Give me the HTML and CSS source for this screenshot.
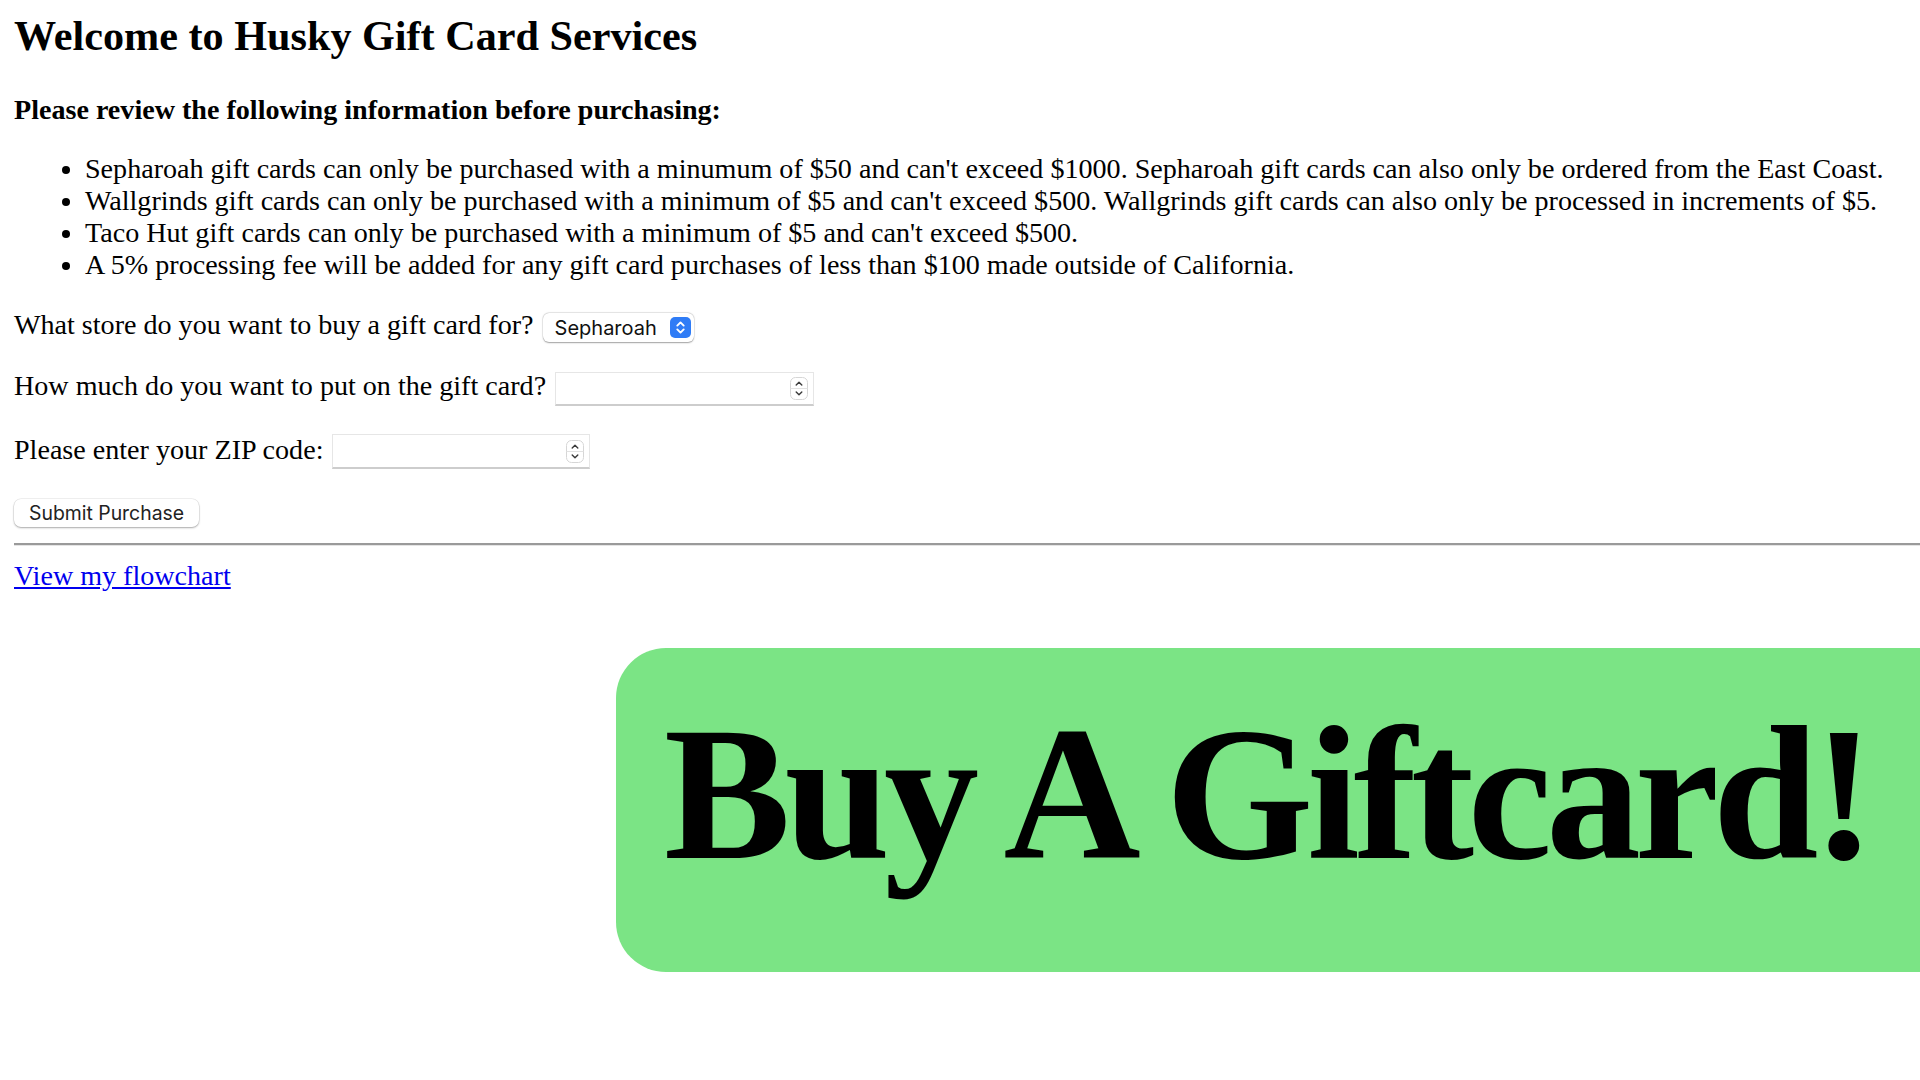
FILE: index.html
```html
<!DOCTYPE html>
<html lang="en">
<head>
<meta charset="utf-8">
<title>Husky Gift Card Services</title>
<link rel="stylesheet" href="styles.css">
</head>
<body>
<main class="page">
  <h1 class="title">Welcome to Husky Gift Card Services</h1>
  <h4 class="subtitle">Please review the following information before purchasing:</h4>
  <ul class="rules">
    <li>Sepharoah gift cards can only be purchased with a minumum of $50 and can't exceed $1000. Sepharoah gift cards can also only be ordered from the East Coast.</li>
    <li>Wallgrinds gift cards can only be purchased with a minimum of $5 and can't exceed $500. Wallgrinds gift cards can also only be processed in increments of $5.</li>
    <li>Taco Hut gift cards can only be purchased with a minimum of $5 and can't exceed $500.</li>
    <li>A 5% processing fee will be added for any gift card purchases of less than $100 made outside of California.</li>
  </ul>
  <form class="order" onsubmit="return false">
    <div class="row row-store">
      <label class="label" for="store">What store do you want to buy a gift card for?</label>
      <span class="select">
        <select id="store" class="select-input">
          <option>Sepharoah</option>
          <option>Wallgrinds</option>
          <option>Taco Hut</option>
        </select>
        <svg class="select-arrow" width="21" height="21" viewBox="0 0 21 21" aria-hidden="true">
          <rect x="0" y="0" width="21" height="21" rx="5" fill="#2f7cf6"/>
          <path d="M7.3 8.6 L10.5 5.4 L13.7 8.6" fill="none" stroke="#fff" stroke-width="1.9" stroke-linecap="round" stroke-linejoin="round"/>
          <path d="M7.3 12.4 L10.5 15.6 L13.7 12.4" fill="none" stroke="#fff" stroke-width="1.9" stroke-linecap="round" stroke-linejoin="round"/>
        </svg>
      </span>
    </div>
    <div class="row row-amount">
      <label class="label" for="amount">How much do you want to put on the gift card?</label>
      <span class="num num-amount">
        <input id="amount" class="num-input" type="number">
        <svg class="spin" width="18" height="23" viewBox="0 0 18 23" aria-hidden="true">
          <rect x="0.5" y="0.5" width="17" height="22" rx="5" fill="#fff" stroke="#d6d6d6"/>
          <line x1="0.5" y1="11.5" x2="17.5" y2="11.5" stroke="#e2e2e2"/>
          <path d="M6.2 8 L9 5.2 L11.8 8" fill="none" stroke="#3a3a3a" stroke-width="1.4" stroke-linecap="round" stroke-linejoin="round"/>
          <path d="M6.2 15 L9 17.8 L11.8 15" fill="none" stroke="#3a3a3a" stroke-width="1.4" stroke-linecap="round" stroke-linejoin="round"/>
        </svg>
      </span>
    </div>
    <div class="row row-zip">
      <label class="label" for="zip">Please enter your ZIP code:</label>
      <span class="num num-zip">
        <input id="zip" class="num-input" type="number">
        <svg class="spin" width="18" height="23" viewBox="0 0 18 23" aria-hidden="true">
          <rect x="0.5" y="0.5" width="17" height="22" rx="5" fill="#fff" stroke="#d6d6d6"/>
          <line x1="0.5" y1="11.5" x2="17.5" y2="11.5" stroke="#e2e2e2"/>
          <path d="M6.2 8 L9 5.2 L11.8 8" fill="none" stroke="#3a3a3a" stroke-width="1.4" stroke-linecap="round" stroke-linejoin="round"/>
          <path d="M6.2 15 L9 17.8 L11.8 15" fill="none" stroke="#3a3a3a" stroke-width="1.4" stroke-linecap="round" stroke-linejoin="round"/>
        </svg>
      </span>
    </div>
    <div class="row row-submit">
      <button class="submit" type="submit">Submit Purchase</button>
    </div>
  </form>
  <hr class="rule">
  <p class="flow"><a class="flow-link" href="#flowchart">View my flowchart</a></p>
  <div class="promo">
    <h2 class="promo-text">Buy A Giftcard!</h2>
  </div>
</main>
</body>
</html>
```
FILE: styles.css
```css
html {
  overflow-x: hidden;
}

body {
  margin: 0;
  background: #fff;
  color: #000;
  font-family: "Liberation Serif", "Times New Roman", serif;
  font-size: 28.1px;
  line-height: 32px;
}

.page {
  padding-left: 14px;
}

.title {
  margin: 12px 0 0;
  font-size: 42.2px;
  line-height: 48px;
  font-weight: 700;
}

.subtitle {
  margin: 34px 0 0;
  font-size: 28.1px;
  line-height: 32px;
  font-weight: 700;
}

.rules {
  margin: 27px 0 0;
  padding-left: 71px;
}

.rules li {
  white-space: nowrap;
}

.order {
  margin: 0;
}

.row {
  display: flex;
  align-items: flex-start;
  gap: 9px;
}

.label {
  white-space: nowrap;
}

.row-store {
  margin-top: 28px;
}

.row-amount {
  margin-top: 28px;
}

.row-zip {
  margin-top: 28px;
}

.row-submit {
  margin-top: 29px;
}

/* select */
.select {
  display: flex;
  align-items: center;
  box-sizing: border-box;
  width: 151px;
  height: 29px;
  margin-top: 4px;
  padding: 0 3px 0 12px;
  background: #fff;
  border-radius: 6px;
  box-shadow: 0 0.5px 1.5px rgba(0, 0, 0, 0.35), 0 0 0 0.5px rgba(0, 0, 0, 0.08);
}

.select-input {
  flex: 1;
  min-width: 0;
  -webkit-appearance: none;
  appearance: none;
  border: 0;
  padding: 0;
  margin: 0;
  background: transparent;
  color: #111;
  font-family: Inter, "Noto Sans", sans-serif;
  font-size: 20px;
  outline: none;
}

.select-arrow {
  flex: none;
  display: block;
}

/* number inputs */
.num {
  display: flex;
  align-items: center;
  box-sizing: border-box;
  background: #fff;
  border: 1px solid #e6e6e6;
  border-bottom: 2px solid #cdcdcd;
  padding-right: 5px;
}

.num-amount {
  width: 259px;
  height: 34px;
  margin-top: 2px;
}

.num-zip {
  width: 258px;
  height: 35px;
  margin-top: 0;
}

.num-input {
  flex: 1;
  min-width: 0;
  height: 100%;
  border: 0;
  padding: 0 8px;
  margin: 0;
  background: transparent;
  font-family: Inter, "Noto Sans", sans-serif;
  font-size: 20px;
  outline: none;
  -moz-appearance: textfield;
  appearance: textfield;
}

.num-input::-webkit-inner-spin-button,
.num-input::-webkit-outer-spin-button {
  -webkit-appearance: none;
  margin: 0;
}

.spin {
  flex: none;
  display: block;
}

/* button */
.submit {
  box-sizing: border-box;
  height: 28px;
  margin: 1px 0 0;
  padding: 0 15px;
  border: 0;
  border-radius: 7px;
  background: #fff;
  color: #222;
  font-family: Inter, "Noto Sans", sans-serif;
  font-size: 19.4px;
  line-height: 28px;
  box-shadow: 0 1px 2px rgba(0, 0, 0, 0.3), 0 0 0 0.5px rgba(0, 0, 0, 0.1);
}

.rule {
  margin: 16px 0 0;
  height: 0;
  border: 0;
  border-top: 2px solid #9a9a9a;
  border-bottom: 1px solid #e4e4e4;
}

.flow {
  margin: 14px 0 0;
}

.flow-link {
  color: #0000ee;
  text-decoration: underline;
}

.promo {
  margin: 56px 0 0 602px;
  padding: 37px 0 69px 48px;
  background: #7be485;
  border-radius: 50px 0 0 50px;
}

.promo-text {
  margin: 0;
  font-size: 190px;
  line-height: 218px;
  font-weight: 700;
  letter-spacing: -6.2px;
  white-space: nowrap;
}
```
